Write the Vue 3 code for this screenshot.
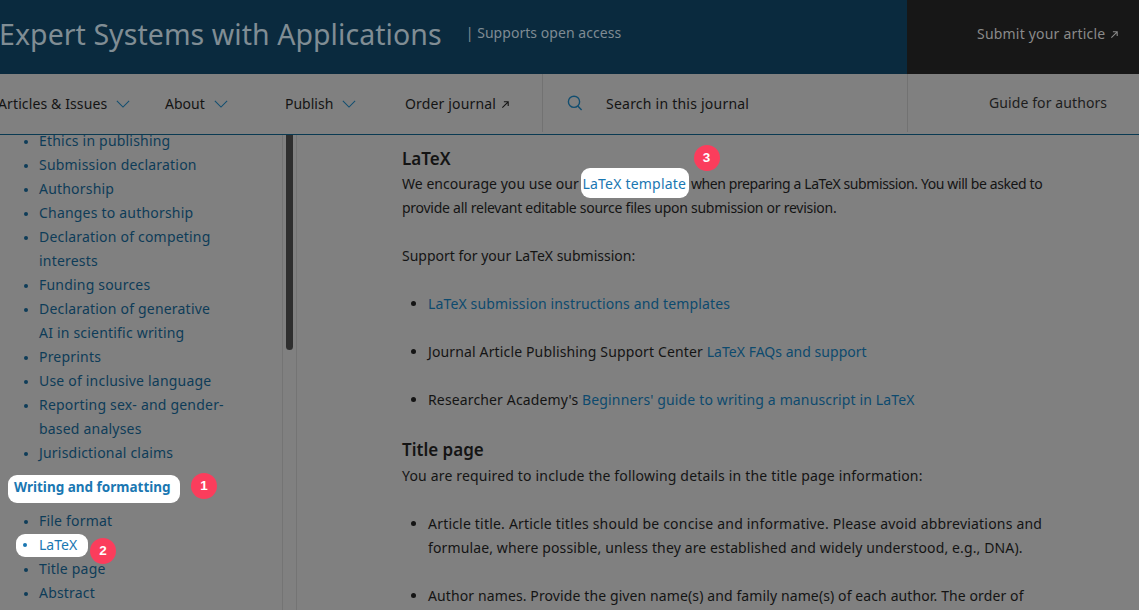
<script setup>
const sideBefore = [
  ['Ethics in publishing'], ['Submission declaration'], ['Authorship'], ['Changes to authorship'],
  ['Declaration of competing', 'interests'], ['Funding sources'],
  ['Declaration of generative', 'AI in scientific writing'], ['Preprints'], ['Use of inclusive language'],
  ['Reporting sex- and gender-', 'based analyses'], ['Jurisdictional claims']
]
const navItems = [
  { label: 'Articles & Issues', cls: 'w-articles' },
  { label: 'About', cls: 'w-about' },
  { label: 'Publish', cls: 'w-publish' }
]
</script>

<template>
  <div class="page">
    <header class="top">
      <div class="top-main">
        <h1 class="journal">Expert Systems with Applications</h1>
        <span class="access">| Supports open access</span>
      </div>
      <div class="submit">
        <span>Submit your article</span>
        <svg class="ext" viewBox="0 0 10 10"><path d="M1.5 8.5 8 2M3.2 2H8v4.8" /></svg>
      </div>
    </header>

    <nav class="nav">
      <div class="nav-left">
        <div v-for="n in navItems" :key="n.label" class="nav-item" :class="n.cls">
          <span>{{ n.label }}</span>
          <svg class="chev" viewBox="0 0 16 9"><path d="M1 1l7 7 7-7" /></svg>
        </div>
        <div class="nav-item order">
          <span>Order journal</span>
          <svg class="ext dark" viewBox="0 0 10 10"><path d="M1.5 8.5 8 2M3.2 2H8v4.8" /></svg>
        </div>
      </div>
      <div class="nav-search">
        <svg class="search" viewBox="0 0 16 16"><circle cx="7" cy="6.8" r="5.6" /><path d="M10.8 11l3.8 4" /></svg>
        <span>Search in this journal</span>
      </div>
      <div class="nav-guide">Guide for authors</div>
    </nav>

    <div class="body">
      <aside class="side">
        <div class="side-scroll">
          <ul class="side-list">
            <li v-for="s in sideBefore" :key="s[0]">
              <template v-for="(line, i) in s" :key="i">{{ line }}<br v-if="i < s.length - 1" /></template>
            </li>
          </ul>
          <div class="side-head">
            <span class="mark head-mark">Writing and formatting</span>
            <span class="badge b1">1</span>
          </div>
          <ul class="side-list">
            <li>File format</li>
            <li class="latex-li"><span class="latex-mark"></span><span class="latex-dot"></span><span class="latex-text">LaTeX</span><span class="badge b2">2</span></li>
            <li>Title page</li>
            <li>Abstract</li>
          </ul>
        </div>
        <div class="rail"><div class="thumb"></div></div>
      </aside>

      <main class="main">
        <h2 class="h-first">LaTeX</h2>
        <p class="para">
          <span class="ls-lead">We encourage you use our </span><span class="tpl"><span class="mark tpl-mark">LaTeX template</span><span class="badge b3">3</span></span> <span class="ls-when">when preparing a LaTeX submission. You will be asked to</span><br />
          <span class="ls-prov">provide all relevant editable source files upon submission or revision.</span>
        </p>
        <p class="para ls-zero">Support for your LaTeX submission:</p>
        <ul class="main-list">
          <li><a>LaTeX submission instructions and templates</a></li>
          <li>Journal Article Publishing Support Center <a class="ls-faq">LaTeX FAQs and support</a></li>
          <li>Researcher Academy's <a>Beginners' guide to writing a manuscript in LaTeX</a></li>
        </ul>
        <h2 class="h-second">Title page</h2>
        <p class="para ls-req">You are required to include the following details in the title page information:</p>
        <ul class="main-list">
          <li><span class="ls-art">Article title. Article titles should be concise and informative. Please avoid abbreviations and</span><br /><span class="ls-form">formulae, where possible, unless they are established and widely understood, e.g., DNA).</span></li>
          <li class="ls-auth">Author names. Provide the given name(s) and family name(s) of each author. The order of</li>
        </ul>
      </main>
    </div>
  </div>
</template>

<style>
html, body { margin: 0; background: #808080; }
</style>

<style scoped>
.page {
  width: 1139px; height: 610px; overflow: hidden; background: #808080;
  font-family: "Noto Sans", "Open Sans", sans-serif; font-size: 14px; color: #141414;
}
.top { display: flex; height: 74px; background: #0a2a3e; }
.top-main { width: 907px; display: flex; align-items: center; padding-bottom: 6px; box-sizing: border-box; }
.journal { margin: 0 24px 0 -1px; font-size: 28.5px; font-weight: 400; color: #808d94; white-space: nowrap; line-height: 1; letter-spacing: .06px; }
.access { font-size: 14px; color: #7f8b93; margin-top: -4px; letter-spacing: .05px; }
.submit { flex: 1; background: #171717; color: #8a8a8a; display: flex; align-items: center; padding: 0 0 8px 70px; gap: 5px; letter-spacing: .2px; }
.ext { width: 9px; height: 9px; fill: none; stroke: #8a8a8a; stroke-width: 1.2; margin-top: 2px; }
.ext.dark { stroke: #141414; }
.nav { display: flex; height: 60px; border-bottom: 1px solid #0a3a52; }
.nav-left { width: 544px; flex: none; display: flex; align-items: center; margin-left: -2px; padding-bottom: 2px; box-sizing: border-box; }
.nav-item { display: flex; align-items: center; gap: 9px; white-space: nowrap; color: #141414; }
.w-articles { width: 167px; letter-spacing: .12px; }
.w-about { width: 120px; }
.w-publish { width: 120px; }
.order { gap: 5px; letter-spacing: .16px; }
.chev { width: 14px; height: 8px; fill: none; stroke: #124e70; stroke-width: 1.2; margin-top: 2px; flex: none; }
.nav-search { width: 366px; flex: none; box-sizing: border-box; display: flex; align-items: center; border-left: 1px solid #727272; border-right: 1px solid #727272; padding-left: 24px; margin-bottom: 2px; letter-spacing: .23px; }
.search { width: 16px; height: 16px; fill: none; stroke: #124e70; stroke-width: 1.4; margin-right: 23px; }
.nav-guide { flex: 1; display: flex; align-items: center; padding-left: 81px; padding-bottom: 3px; color: #1d1d1d; letter-spacing: .1px; }

.body { display: flex; height: 475px; overflow: hidden; }
.side { width: 297px; flex: none; display: flex; position: relative; }
.side-scroll { width: 282px; flex: none; overflow: hidden; border-right: 1px solid #747474; color: #0e3c58; line-height: 24px; letter-spacing: .2px; }
.side-list { list-style: disc; margin: 0; padding: 0 0 0 39px; }
.side-list:first-child { margin-top: -6px; }
.side-list li { white-space: nowrap; }
.side-list li::marker { color: #0e3c58; font-size: 12px; }
.side-head { position: relative; margin: 10px 0 10px 8px; height: 24px; }
.mark { background: #fff; color: #1a77b2; }
.head-mark { display: inline-block; padding: 0 9px 4px 6px; line-height: 24px; font-weight: 700; font-size: 13.5px; border-radius: 9px; letter-spacing: 0; }
.side-list li.latex-li { position: relative; list-style: none; }
.latex-mark { position: absolute; left: -23px; top: 1px; width: 72px; height: 23px; background: #fff; border-radius: 9px; }
.latex-dot { position: absolute; left: -16px; top: 10px; width: 4px; height: 4px; border-radius: 50%; background: #1a77b2; }
.latex-text { position: relative; color: #1a77b2; letter-spacing: 0; }
.badge {
  position: absolute; width: 26px; height: 26px; border-radius: 50%; background: #fb3d5c; color: #fff;
  font: 700 13.5px/26px "Liberation Sans", Arial, sans-serif; text-align: center; letter-spacing: 0;
}
.b1 { left: 183px; top: -2px; }
.b2 { left: 51px; top: 5px; }
.rail { flex: 1; border-right: 1px solid #747474; position: relative; }
.thumb { position: absolute; left: 3px; top: 0; width: 7px; height: 215px; background: #2e2e2e; border-radius: 0 0 4px 4px; }

.main { flex: 1; padding: 0 0 0 105px; line-height: 24px; color: #141414; white-space: nowrap; letter-spacing: .14px; }
.main h2 { margin: 0; font-size: 17px; line-height: 24px; font-weight: 600; letter-spacing: 0; }
.h-first { padding: 12px 0 1px; }
.main .h-second { margin: 26px 0 2px; }
.para { margin: 0 0 24px; }
.ls-zero { letter-spacing: 0; }
.ls-lead { letter-spacing: .04px; }
.ls-when { letter-spacing: -.4px; }
.ls-prov { letter-spacing: -.26px; }
.ls-req { letter-spacing: .18px; }
.ls-faq { letter-spacing: .03px; }
.ls-art { letter-spacing: .2px; }
.ls-form { letter-spacing: .13px; }
.ls-auth { letter-spacing: .11px; }
.main-list { margin: 0; padding: 0 0 0 26px; list-style: disc; }
.main-list li { margin-bottom: 24px; }
.main-list a { color: #0d4a6e; }
.main-list:has(+ h2) li:last-child { margin-bottom: 0; }
.tpl { position: relative; }
.tpl-mark { padding: 6px 3px 5px 2px; margin: 0 -2px 0 -2px; border-radius: 9px; letter-spacing: .2px; }
.b3 { left: 111px; top: -29px; }
</style>
